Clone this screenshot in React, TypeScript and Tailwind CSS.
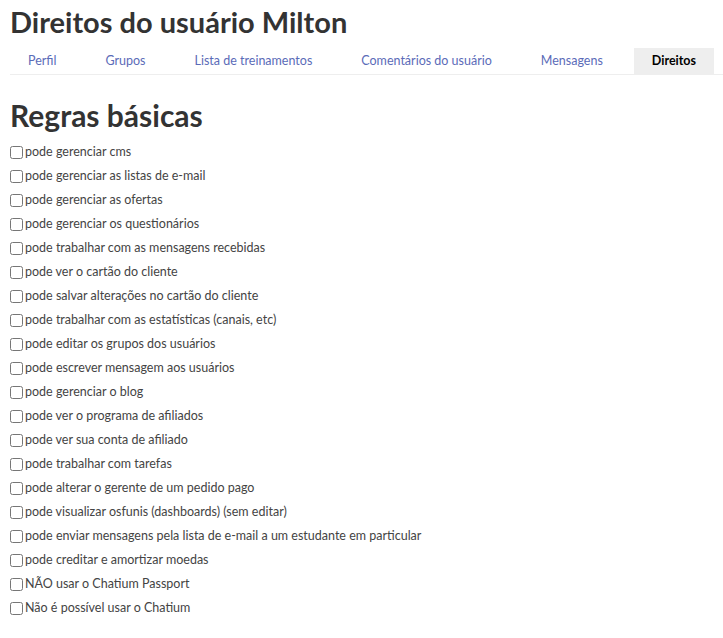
const tabs = [
  'Perfil',
  'Grupos',
  'Lista de treinamentos',
  'Comentários do usuário',
  'Mensagens',
  'Direitos',
]

const rules = [
  'pode gerenciar cms',
  'pode gerenciar as listas de e-mail',
  'pode gerenciar as ofertas',
  'pode gerenciar os questionários',
  'pode trabalhar com as mensagens recebidas',
  'pode ver o cartão do cliente',
  'pode salvar alterações no cartão do cliente',
  'pode trabalhar com as estatísticas (canais, etc)',
  'pode editar os grupos dos usuários',
  'pode escrever mensagem aos usuários',
  'pode gerenciar o blog',
  'pode ver o programa de afiliados',
  'pode ver sua conta de afiliado',
  'pode trabalhar com tarefas',
  'pode alterar o gerente de um pedido pago',
  'pode visualizar osfunis (dashboards) (sem editar)',
  'pode enviar mensagens pela lista de e-mail a um estudante em particular',
  'pode creditar e amortizar moedas',
  'NÃO usar o Chatium Passport',
  'Não é possível usar o Chatium',
]

export default function App() {
  return (
    <div className="bg-white min-h-[638px] pl-[10px] pt-[4px] text-[#333] font-['Lato',sans-serif]">
      <h1 className="text-[29px] font-bold leading-[36px]">Direitos do usuário Milton</h1>

      {/* Tabs */}
      <div className="mt-[8px] flex gap-[13px] border-b border-[#eee]">
        {tabs.map((t) => (
          <div
            key={t}
            className={
              t === 'Direitos'
                ? 'shrink-0 whitespace-nowrap px-[18px] h-[26px] flex items-center text-[12.5px] font-bold text-black bg-[#eee]'
                : 'shrink-0 whitespace-nowrap px-[18px] h-[26px] flex items-center text-[12.5px] text-[#5b6bb8]'
            }
          >
            {t}
          </div>
        ))}
      </div>

      <h2 className="mt-[22px] text-[30px] font-bold leading-[36px]">Regras básicas</h2>

      <div className="mt-[7px] flex flex-col">
        {rules.map((r) => (
          <label key={r} className="flex items-center h-[24px] text-[12.5px] text-[#444]">
            <input type="checkbox" className="w-[13px] h-[13px] m-0 mr-[2px]" />
            {r}
          </label>
        ))}
      </div>
    </div>
  )
}
